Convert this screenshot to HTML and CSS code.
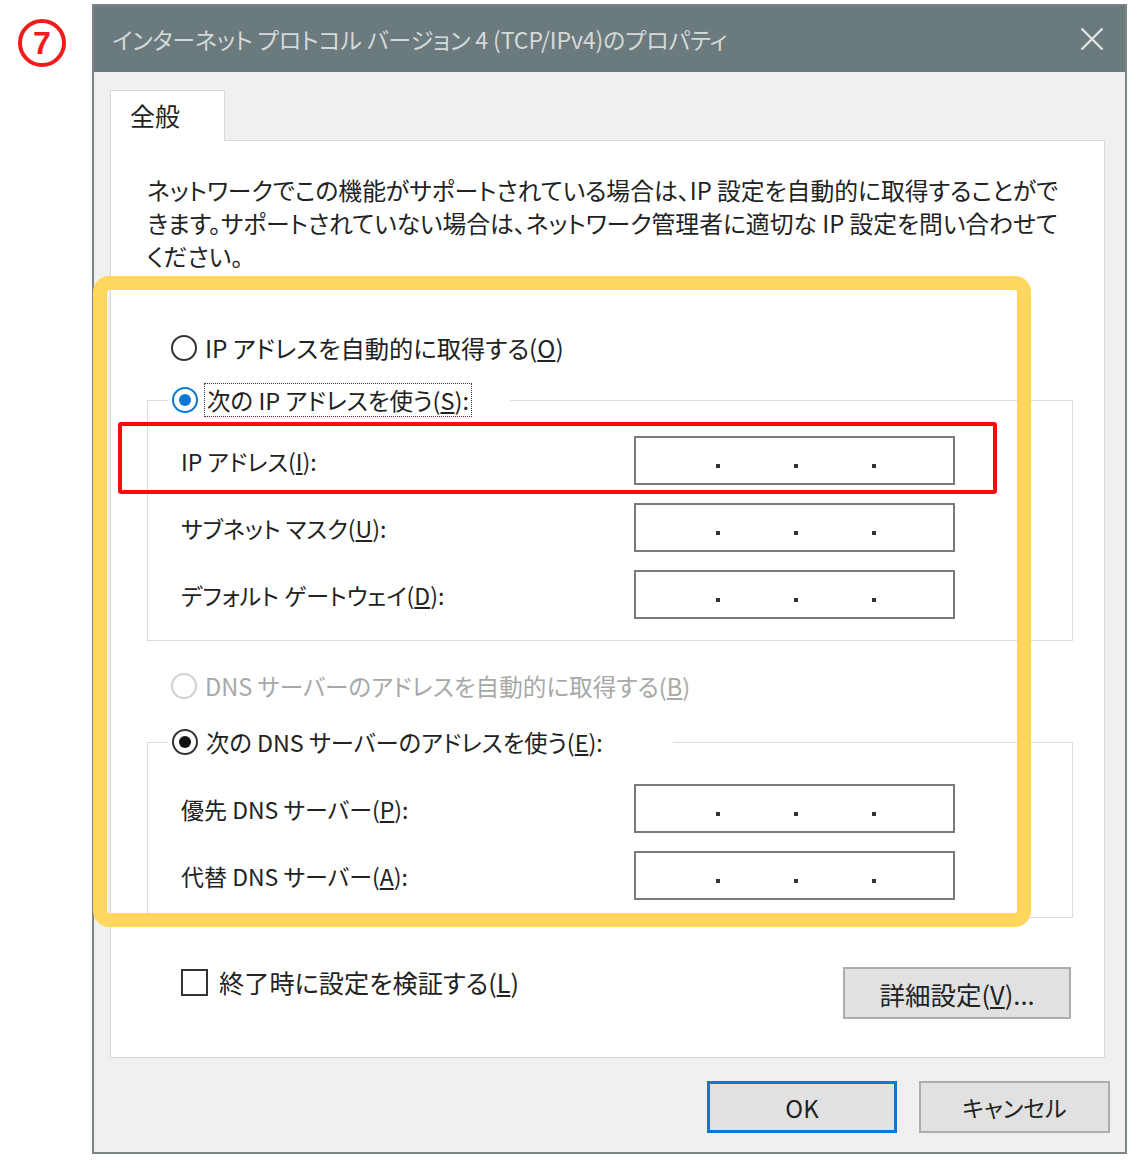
FILE: index.html
```html
<!DOCTYPE html>
<html lang="ja">
<head>
<meta charset="utf-8">
<title>インターネット プロトコル バージョン 4 (TCP/IPv4)のプロパティ</title>
<link rel="stylesheet" href="styles.css">
</head>
<body>
<div class="page">
  <div class="marker">7</div>
  <div class="window">
    <div class="titlebar">
      <span class="title">インターネット プロトコル バージョン 4 (TCP/IPv4)のプロパティ</span>
      <svg class="close" width="24" height="24" viewBox="0 0 24 24"><path d="M1.5 1.5 L22.5 22.5 M22.5 1.5 L1.5 22.5"/></svg>
    </div>
    <div class="body">
      <div class="tabs"><div class="tab">全般</div></div>
      <div class="panel">
        <p class="desc">ネットワークでこの機能がサポートされている場合は、IP 設定を自動的に取得することがで<br>きます。サポートされていない場合は、ネットワーク管理者に適切な IP 設定を問い合わせて<br>ください。</p>

        <div class="radio-row first"><span class="radio"></span><span class="rlabel">IP アドレスを自動的に取得する(<u>O</u>)</span></div>

        <fieldset class="group group-ip">
          <legend class="radio-row legend-ip"><span class="radio on-blue"></span><span class="rlabel focus">次の IP アドレスを使う(<u>S</u>):</span></legend>
          <div class="rows rows-ip">
            <div class="field-row"><span class="flabel">IP アドレス(<u>I</u>):</span><div class="ipbox"><i></i><i></i><i></i></div></div>
            <div class="field-row"><span class="flabel">サブネット マスク(<u>U</u>):</span><div class="ipbox"><i></i><i></i><i></i></div></div>
            <div class="field-row"><span class="flabel">デフォルト ゲートウェイ(<u>D</u>):</span><div class="ipbox"><i></i><i></i><i></i></div></div>
          </div>
        </fieldset>

        <div class="radio-row dns-auto disabled"><span class="radio"></span><span class="rlabel">DNS サーバーのアドレスを自動的に取得する(<u>B</u>)</span></div>

        <fieldset class="group group-dns">
          <legend class="radio-row legend-dns"><span class="radio on-black"></span><span class="rlabel">次の DNS サーバーのアドレスを使う(<u>E</u>):</span></legend>
          <div class="rows rows-dns">
            <div class="field-row"><span class="flabel">優先 DNS サーバー(<u>P</u>):</span><div class="ipbox"><i></i><i></i><i></i></div></div>
            <div class="field-row"><span class="flabel">代替 DNS サーバー(<u>A</u>):</span><div class="ipbox"><i></i><i></i><i></i></div></div>
          </div>
        </fieldset>

        <div class="options">
          <div class="check-row"><span class="checkbox"></span><span>終了時に設定を検証する(<u>L</u>)</span></div>
          <button class="btn btn-adv">詳細設定(<u>V</u>)...</button>
        </div>
      </div>
      <div class="footer">
        <button class="btn btn-ok">OK</button>
        <button class="btn btn-cancel">キャンセル</button>
      </div>
    </div>
  </div>
  <div class="anno-yellow"></div>
  <div class="anno-red"></div>
</div>
</body>
</html>
```
FILE: styles.css
```css
* { box-sizing: border-box; }
body {
  margin: 0;
  background: #fff;
  font-family: "Noto Sans CJK JP", "Noto Sans", sans-serif;
  font-feature-settings: "palt";
  color: #222;
  font-size: 23px;
}
.page {
  position: relative;
  width: 1142px;
  height: 1170px;
  display: flex;
  align-items: flex-start;
  padding-top: 4px;
}
.marker {
  flex: none;
  margin: 15px 0 0 18px;
  width: 48px;
  height: 48px;
  border: 4px solid #f01c1c;
  border-radius: 50%;
  color: #f01c1c;
  font: 700 32px/40px "Liberation Sans", sans-serif;
  text-align: center;
}
.window {
  flex: none;
  margin-left: 26px;
  width: 1035px;
  border: 2px solid #7b8588;
  background: #f0f0f0;
  display: flex;
  flex-direction: column;
}
.titlebar {
  height: 66px;
  background: #6b7a7d;
  display: flex;
  align-items: center;
  justify-content: space-between;
  padding: 0 21px 0 18px;
  color: #d4d9da;
  font-size: 23px;
  letter-spacing: -0.1px;
}
.close path { stroke: #e2e6e7; stroke-width: 2.4; fill: none; }
.body {
  padding: 18px 20px 19px 16px;
}
.tabs { display: flex; }
.tab {
  position: relative;
  z-index: 1;
  width: 115px;
  height: 51px;
  margin-bottom: -1px;
  background: #fff;
  border: 1px solid #d9d9d9;
  border-bottom: none;
  padding: 6px 0 0 19px;
  font-size: 25px;
  line-height: 36px;
}
.panel {
  background: #fff;
  border: 1px solid #d9d9d9;
  padding: 32px 31px 38px 36px;
}
.desc {
  margin: 0;
  line-height: 33px;
  font-size: 23.8px;
  white-space: nowrap;
}
.radio-row {
  display: flex;
  align-items: center;
  gap: 8px;
  height: 36px;
}
.radio-row.first { margin: 58px 0 0 24px; }
.radio {
  flex: none;
  width: 26px;
  height: 26px;
  border: 2px solid #333;
  border-radius: 50%;
  background: #fff;
  display: flex;
  align-items: center;
  justify-content: center;
}
.radio.on-blue { border-color: #0a78d4; }
.radio.on-blue::after,
.radio.on-black::after {
  content: "";
  width: 12px;
  height: 12px;
  border-radius: 50%;
  background: #0a78d4;
}
.radio.on-black::after { background: #111; }
.rlabel { line-height: 32px; white-space: nowrap; font-size: 24.3px; }
.legend-ip .rlabel { font-size: 23.5px; }
.legend-dns .rlabel { font-size: 23.3px; }
.dns-auto .rlabel { font-size: 23.6px; }
.rlabel.focus {
  border: 1px dotted #333;
  padding: 0 2px;
  margin-left: -2px;
}
.disabled { color: #a8a8a8; }
.disabled .radio { border-color: #cfcfcf; }
.dns-auto { margin: 27px 0 0 24px; }

.group {
  margin: 16px 0 0;
  padding: 0;
  border: 1px solid #dcdcdc;
  min-width: 0;
}
.group-dns { margin-top: 20px; }
.legend-ip { margin-left: 20px; padding: 0 38px 0 4px; }
.legend-dns { margin-left: 20px; padding: 0 70px 0 4px; }
.rows {
  display: flex;
  flex-direction: column;
  gap: 18px;
  padding-left: 33px;
}
.rows-ip { padding-top: 18px; padding-bottom: 21px; }
.rows-dns { padding-top: 24px; padding-bottom: 17px; }
.field-row {
  display: grid;
  grid-template-columns: 453px 321px;
  align-items: center;
  height: 49px;
}
.flabel { white-space: nowrap; }
.ipbox {
  height: 49px;
  border: 2px solid #7a7a7a;
  background: #fff;
  display: flex;
  justify-content: center;
  align-items: center;
  gap: 74px;
  padding-left: 3px;
}
.ipbox i {
  width: 4px;
  height: 4px;
  background: #333;
  margin-top: 10px;
}

.options {
  display: flex;
  justify-content: space-between;
  align-items: flex-start;
  margin-top: 49px;
  padding-left: 34px;
}
.check-row {
  display: flex;
  align-items: center;
  gap: 11px;
  height: 30px;
  white-space: nowrap;
  font-size: 25.2px;
}
.checkbox {
  width: 27px;
  height: 27px;
  border: 2px solid #333;
  background: #fff;
}
.btn {
  font-family: inherit;
  font-feature-settings: "palt";
  font-size: 24px;
  color: #222;
  background: #e1e1e1;
  border: 2px solid #adadad;
  height: 52px;
  padding: 0;
}
.btn-adv { width: 228px; margin-right: 2px; font-size: 25.5px; }
.footer {
  display: flex;
  justify-content: flex-end;
  gap: 22px;
  margin-top: 23px;
  margin-right: -5px;
}
.footer .btn { width: 191px; }
.footer .btn-ok { border: 3px solid #0a78d4; width: 190px; }
.footer .btn-cancel { font-size: 23px; }

.anno-yellow {
  position: absolute;
  left: 93px;
  top: 276px;
  width: 938px;
  height: 651px;
  border: 14px solid #ffd65e;
  border-radius: 16px;
  pointer-events: none;
}
.anno-red {
  position: absolute;
  left: 118px;
  top: 422px;
  width: 879px;
  height: 72px;
  border: 4px solid #ff0a0a;
  border-radius: 3px;
  pointer-events: none;
}
```
